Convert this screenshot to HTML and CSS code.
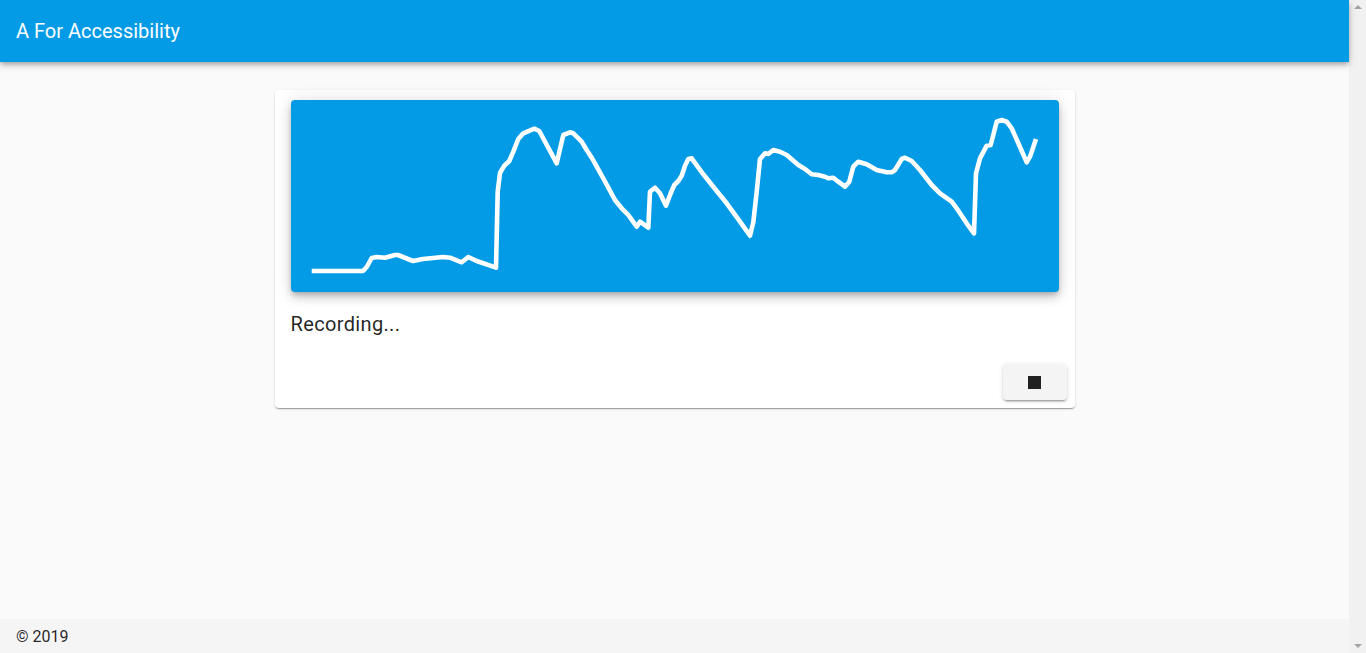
FILE: index.html
```html
<!DOCTYPE html>
<html lang="en">
<head>
<meta charset="utf-8">
<title>A For Accessibility</title>
<link rel="stylesheet" href="styles.css">
</head>
<body>
<div class="shell">
  <div class="page">
    <header class="toolbar">
      <span class="toolbar-title">A For Accessibility</span>
    </header>
    <main class="main">
      <section class="card">
        <div class="card-content">
          <div class="chart">
            <svg class="chart-svg" viewBox="291 100 768 192" width="768" height="192" aria-hidden="true">
              <polyline fill="none" stroke="#ffffff" stroke-width="4.6" stroke-linejoin="round" points="311.7,271 363,271 366.7,267 371.7,258 376.7,257 385,257.7 395,255 398,255 413,261 423,259 443,257 450,257.7 461.7,262.3 468.3,257 476.7,261 496,267.7 497.7,191.7 500,173 504.3,165.7 509.3,161 513.3,151.7 518.3,139 523.3,133.3 534.3,128.7 539.3,131 556.7,163.3 563.3,135 570,132.3 573.3,133.3 581.7,141.7 586.7,150 591.7,157.7 603.3,178.3 615,200 621.7,208.3 628.3,215 636.7,226.7 640,221.7 648.3,227.7 650,191.7 655,187.7 660,193.3 666,205.7 670,195 674.3,185 678.3,181 681.7,175.7 685,165.7 688.3,159 691.7,158.3 703.3,174.3 716.7,191 726.7,203.3 740,221.7 750,235.7 753.3,222.3 756.7,191.7 760,159 765,153.3 768.3,154 773.3,150 780,151.7 786.7,155 798.3,165 805,169 811.7,174.3 818.3,175 825,176.7 828.3,178.3 833.3,177.7 838.3,181.7 845,186.7 849.3,181.7 853.3,166.7 858.3,161.7 866.7,164.3 876.7,170 886.7,172.3 891.7,172.3 895,170 901.7,159 905,157.7 911.7,161 920,170 931.7,185 940,193.3 951.7,201.7 956.7,208.3 966.7,223.3 974,233.3 976,173.3 980,158.3 986.7,145.7 990.7,145 996.7,121.7 1001.7,120 1006.7,121.7 1011.7,128.3 1026.7,162.3 1030,156.7 1036,139"/>
            </svg>
          </div>
          <p class="status">Recording...</p>
        </div>
        <div class="card-actions">
          <button class="btn" type="button" aria-label="Stop recording"><span class="stop-icon"></span></button>
        </div>
      </section>
    </main>
    <footer class="footer">© 2019</footer>
  </div>
  <div class="scrollbar" aria-hidden="true">
    <span class="arrow arrow-up"></span>
    <span class="arrow arrow-down"></span>
  </div>
</div>
</body>
</html>
```

FILE: styles.css
```css
* {
  box-sizing: border-box;
}

html, body {
  margin: 0;
  padding: 0;
  height: 100%;
}

body {
  font-family: Roboto, "Helvetica Neue", "Liberation Sans", sans-serif;
  color: rgba(0, 0, 0, 0.87);
  background: #fafafa;
  overflow: hidden;
}

.shell {
  display: flex;
  height: 100vh;
}

.page {
  flex: 1;
  display: flex;
  flex-direction: column;
  min-width: 0;
  background: #fafafa;
}

.toolbar {
  height: 62px;
  flex: 0 0 62px;
  display: flex;
  align-items: center;
  padding: 0 16px;
  background: #039be5;
  color: #ffffff;
  box-shadow: 0 2px 4px -1px rgba(0, 0, 0, 0.2), 0 4px 5px 0 rgba(0, 0, 0, 0.14), 0 1px 10px 0 rgba(0, 0, 0, 0.12);
  position: relative;
  z-index: 2;
}

.toolbar-title {
  font-size: 20px;
  font-weight: 400;
  letter-spacing: 0;
}

.main {
  flex: 1;
  display: flex;
  justify-content: center;
  align-items: flex-start;
  padding-top: 28px;
}

.card {
  width: 800px;
  background: #ffffff;
  border-radius: 4px;
  box-shadow: 0 2px 1px -1px rgba(0, 0, 0, 0.2), 0 1px 1px 0 rgba(0, 0, 0, 0.14), 0 1px 3px 0 rgba(0, 0, 0, 0.12);
}

.card-content {
  padding: 10px 16px 0;
}

.chart {
  height: 192px;
  background: #039be5;
  border-radius: 4px;
  box-shadow: 0 3px 5px -1px rgba(0, 0, 0, 0.2), 0 6px 10px 0 rgba(0, 0, 0, 0.14), 0 1px 18px 0 rgba(0, 0, 0, 0.12);
}

.chart-svg {
  display: block;
}

.status {
  margin: 20px 0 20px;
  font-size: 20px;
  line-height: 24px;
  letter-spacing: 0.35px;
  color: rgba(0, 0, 0, 0.87);
}

.card-actions {
  display: flex;
  justify-content: flex-end;
  padding: 8px;
}

.btn {
  width: 64px;
  height: 36px;
  border: none;
  border-radius: 4px;
  background: #f4f4f4;
  display: flex;
  align-items: center;
  justify-content: center;
  padding: 0;
  box-shadow: 0 3px 1px -2px rgba(0, 0, 0, 0.2), 0 2px 2px 0 rgba(0, 0, 0, 0.14), 0 1px 5px 0 rgba(0, 0, 0, 0.12);
}

.stop-icon {
  width: 13px;
  height: 13px;
  background: #212121;
}

.footer {
  height: 34px;
  flex: 0 0 34px;
  display: flex;
  align-items: center;
  padding: 0 16px;
  background: #f5f5f5;
  font-size: 16px;
  color: rgba(0, 0, 0, 0.87);
}

.scrollbar {
  width: 17px;
  flex: 0 0 17px;
  background: #f1f1f1;
  display: flex;
  flex-direction: column;
  justify-content: space-between;
  align-items: center;
  padding: 5px 0 5px 1px;
}

.arrow {
  width: 0;
  height: 0;
  border-left: 4px solid transparent;
  border-right: 4px solid transparent;
}

.arrow-up {
  border-bottom: 4px solid #a3a3a3;
}

.arrow-down {
  border-top: 4px solid #a3a3a3;
}
```
